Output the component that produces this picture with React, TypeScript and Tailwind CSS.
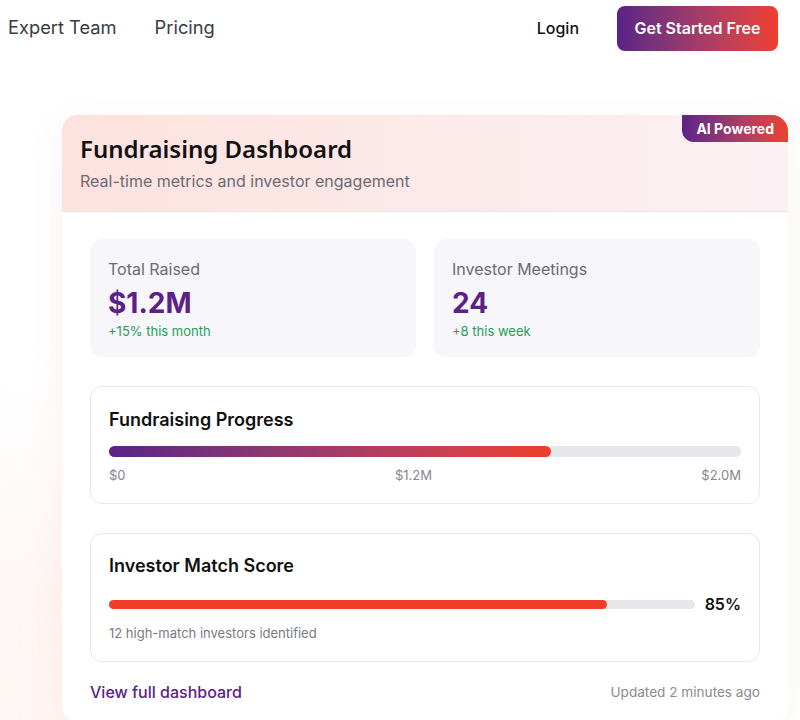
const StatBox = ({ label, value, delta }: { label: string; value: string; delta: string }) => (
    <div className="flex h-[118px] flex-col rounded-xl bg-[#f7f6fb] px-[18px] pt-[20px]">
        <span className="text-[16px] leading-[20px] text-[#6b6b72]">{label}</span>
        <span className="mt-[6px] text-[28px] font-bold leading-[36px] text-[#5b2186]">{value}</span>
        <span className="mt-[1px] text-[13px] leading-[18px] text-[#22a05a]">{delta}</span>
    </div>
);

const App = () => (
    <div className="min-h-screen w-full overflow-hidden bg-white font-['Inter',sans-serif]">
        <nav className="flex h-[56px] items-center pl-[8px] pr-[22px]">
            <a className="text-[18.3px] text-[#3a3a40]">Expert Team</a>
            <a className="ml-[38px] text-[18.3px] text-[#3a3a40]">Pricing</a>
            <div className="ml-auto flex items-center gap-[38px]">
                <a className="text-[16px] font-medium text-[#111]">Login</a>
                <button className="h-[45px] w-[161px] rounded-lg bg-gradient-to-r from-[#5b2186] to-[#f03e2a] text-[16px] font-semibold text-white">
                    Get Started Free
                </button>
            </div>
        </nav>

        <div className="relative pb-[60px] pl-[62px] pr-[12px] pt-[59px]">
            <div className="pointer-events-none absolute -left-[80px] top-[420px] h-[420px] w-[200px] rounded-full bg-[#fdeeea] opacity-60 blur-3xl" />
            <div className="relative overflow-hidden rounded-2xl bg-white shadow-[0_10px_40px_rgba(200,80,70,0.07)]">
                <div className="absolute right-0 top-0 rounded-bl-xl bg-gradient-to-r from-[#5b2186] to-[#f03e2a] px-[14px] py-[4px] text-[14px] font-bold leading-[19px] text-white">
                    AI Powered
                </div>
                <div className="h-[97px] border-b border-[#e8e4ee] bg-gradient-to-r from-[#fde2de] to-[#fbf1f4] px-[18px] pt-[19px]">
                    <h1 className="font-['Noto_Sans',sans-serif] text-[24px] font-semibold leading-[30px] text-[#111]">
                        Fundraising Dashboard
                    </h1>
                    <p className="mt-[7px] text-[16px] leading-[20px] text-[#6b6b72]">Real-time metrics and investor engagement</p>
                </div>

                <div className="px-[28px] pb-[18px] pt-[27px]">
                    <div className="grid grid-cols-2 gap-[18px]">
                        <StatBox label="Total Raised" value="$1.2M" delta="+15% this month" />
                        <StatBox label="Investor Meetings" value="24" delta="+8 this week" />
                    </div>

                    <div className="mt-[29px] h-[118px] rounded-xl border border-[#e5e7eb] px-[18px] pt-[21px]">
                        <h2 className="text-[18px] font-semibold leading-[24px] text-[#111]">Fundraising Progress</h2>
                        <div className="mt-[14px] h-[11px] w-full rounded-full bg-[#e5e7eb]">
                            <div className="h-full w-[70%] rounded-full bg-gradient-to-r from-[#5b2186] to-[#f03e2a]" />
                        </div>
                        <div className="mt-[9px] flex justify-between text-[13px] leading-[18px] text-[#85858c]">
                            <span>$0</span>
                            <span>$1.2M</span>
                            <span>$2.0M</span>
                        </div>
                    </div>

                    <div className="mt-[29px] h-[129px] rounded-xl border border-[#e5e7eb] px-[18px] pt-[20px]">
                        <h2 className="text-[18px] font-semibold leading-[24px] text-[#111]">Investor Match Score</h2>
                        <div className="mt-[14px] flex items-center gap-[10px]">
                            <div className="h-[9px] flex-1 rounded-full bg-[#e5e7eb]">
                                <div className="h-full w-[85%] rounded-full bg-[#f03e2a]" />
                            </div>
                            <span className="text-[16px] font-semibold text-[#111]">85%</span>
                        </div>
                        <p className="mt-[8px] text-[13px] leading-[18px] text-[#7a7a82]">12 high-match investors identified</p>
                    </div>

                    <div className="mt-[18px] flex items-center justify-between">
                        <a className="text-[16px] font-medium text-[#5b2186]">View full dashboard</a>
                        <span className="text-[13.6px] text-[#8a8a92]">Updated 2 minutes ago</span>
                    </div>
                </div>
            </div>
        </div>
    </div>
);

export default App;
